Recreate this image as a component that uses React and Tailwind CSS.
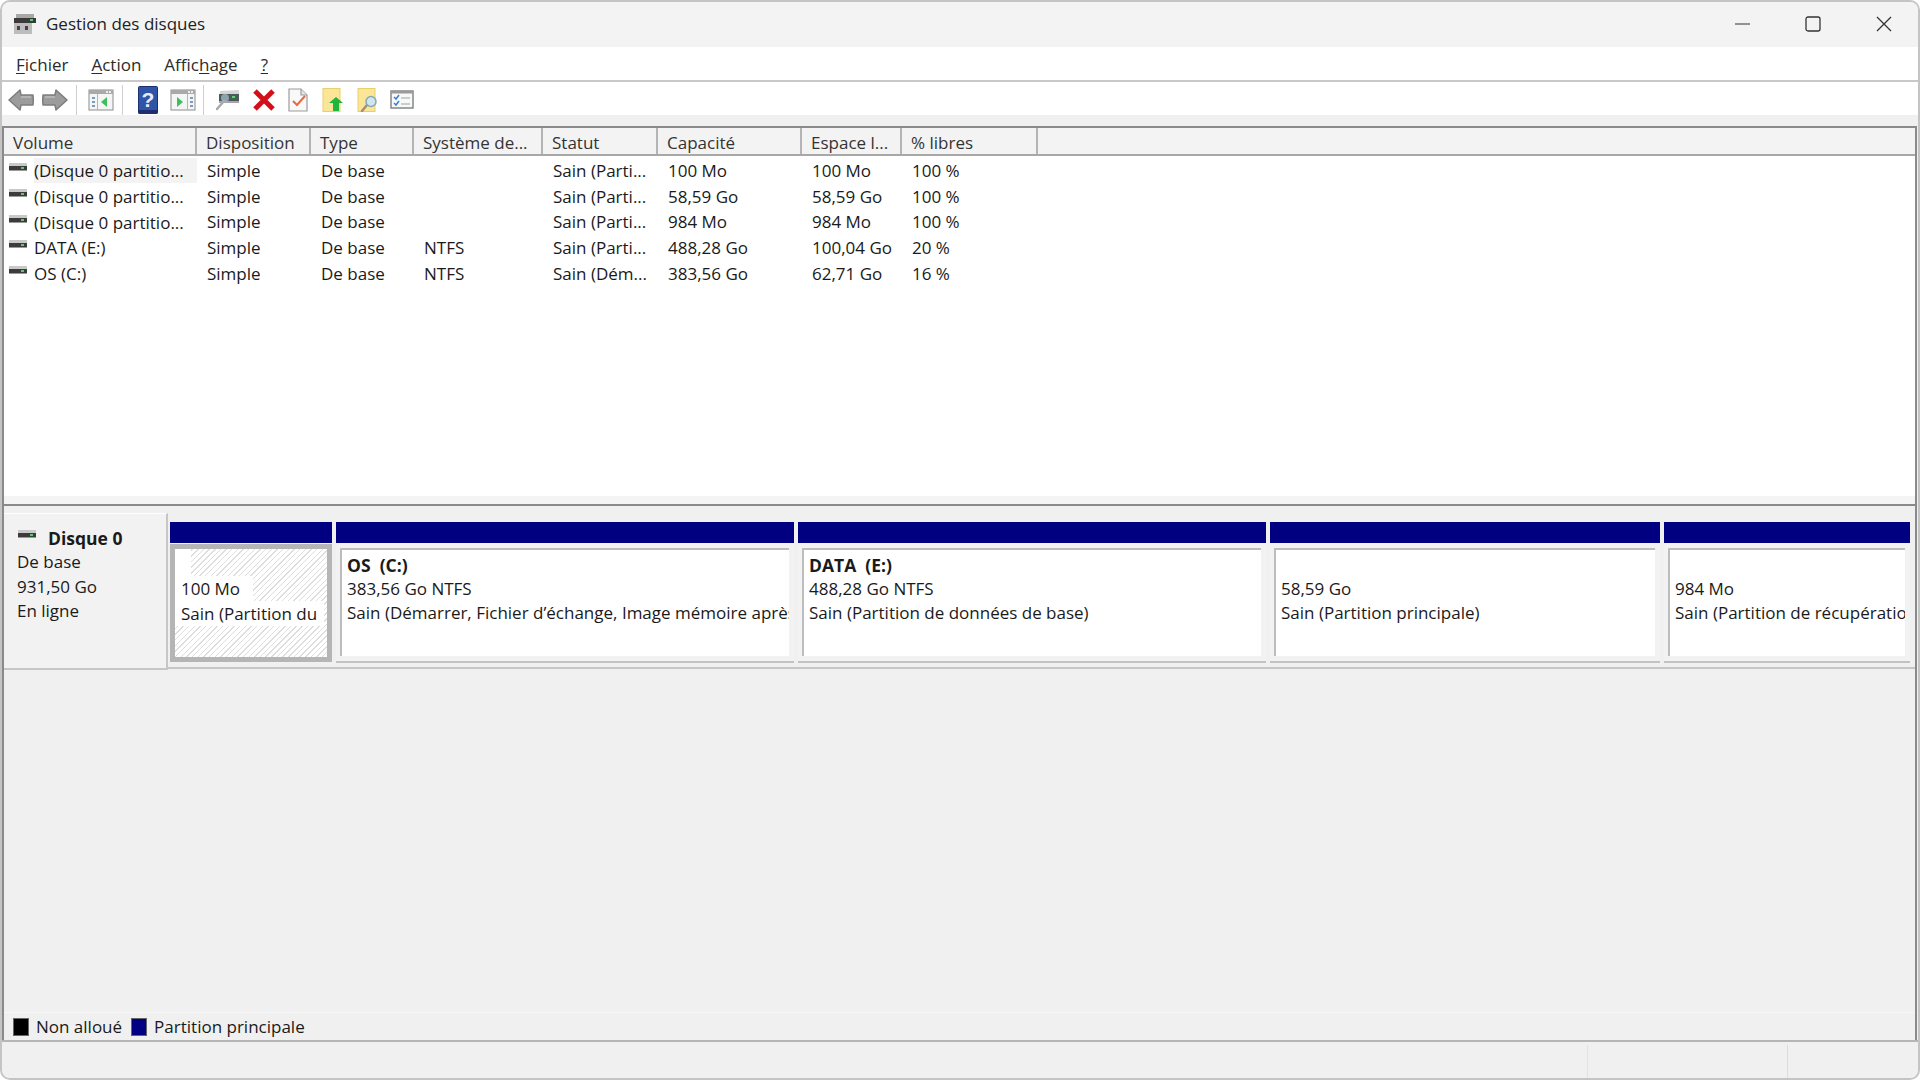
import React from 'react'

const font = { fontFamily: '"Open Sans", "Noto Sans", sans-serif' }

const columns = [
  { label: 'Volume', w: 'w-[193px]' },
  { label: 'Disposition', w: 'w-[114px]' },
  { label: 'Type', w: 'w-[103px]' },
  { label: 'Système de...', w: 'w-[129px]' },
  { label: 'Statut', w: 'w-[115px]' },
  { label: 'Capacité', w: 'w-[144px]' },
  { label: 'Espace l...', w: 'w-[100px]' },
  { label: '% libres', w: 'w-[136px]' },
]

const rows = [
  ['(Disque 0 partitio...', 'Simple', 'De base', '', 'Sain (Parti...', '100 Mo', '100 Mo', '100 %'],
  ['(Disque 0 partitio...', 'Simple', 'De base', '', 'Sain (Parti...', '58,59 Go', '58,59 Go', '100 %'],
  ['(Disque 0 partitio...', 'Simple', 'De base', '', 'Sain (Parti...', '984 Mo', '984 Mo', '100 %'],
  ['DATA (E:)', 'Simple', 'De base', 'NTFS', 'Sain (Parti...', '488,28 Go', '100,04 Go', '20 %'],
  ['OS (C:)', 'Simple', 'De base', 'NTFS', 'Sain (Dém...', '383,56 Go', '62,71 Go', '16 %'],
]

function DiskIcon() {
  return (
    <svg width="20" height="10" viewBox="0 0 20 10" className="shrink-0">
      <rect x="1" y="0" width="18" height="3" fill="#c9c9c9" />
      <rect x="1" y="3" width="18" height="4" fill="#3c3c3c" />
      <rect x="13" y="4" width="3" height="2" fill="#4fd16a" />
      <rect x="1" y="7" width="18" height="1" fill="#9a9a9a" />
    </svg>
  )
}

function ArrowIcon({ flip }) {
  return (
    <svg width="26" height="24" viewBox="0 0 26 24" className={flip ? '-scale-x-100' : ''}>
      <path d="M1 12 L12 2 L13 7 L25 7 Q25.500 12 25 17 L13 17 L12 22 Z" fill="#9c9c9c" stroke="#7d7d7d" strokeWidth="1.500" strokeLinejoin="round" />
      <path d="M13 9 L23 9" stroke="#bdbdbd" strokeWidth="1.500" />
    </svg>
  )
}

function PaneIcon({ right }) {
  return (
    <svg width="26" height="22" viewBox="0 0 26 22">
      <rect x="1" y="1" width="24" height="20" fill="#f4f6f6" stroke="#8c8c8c" />
      <rect x="1" y="1" width="24" height="4" fill="#a9a9a9" />
      <rect x="18" y="2" width="2" height="2" fill="#eee" />
      <rect x="21" y="2" width="2" height="2" fill="#eee" />
      {right ? (
        <>
          <rect x="17" y="5" width="1" height="16" fill="#b5b5b5" />
          <rect x="20" y="8" width="3" height="2" fill="#7f9bb5" />
          <rect x="20" y="12" width="3" height="2" fill="#7f9bb5" />
          <rect x="20" y="16" width="3" height="2" fill="#7f9bb5" />
          <path d="M7 8 L13 13 L7 18 Z" fill="#3fbf5a" />
        </>
      ) : (
        <>
          <rect x="9" y="5" width="1" height="16" fill="#b5b5b5" />
          <rect x="4" y="8" width="3" height="2" fill="#7f9bb5" />
          <rect x="4" y="12" width="3" height="2" fill="#7f9bb5" />
          <rect x="4" y="16" width="3" height="2" fill="#7f9bb5" />
          <path d="M19 8 L13 13 L19 18 Z" fill="#3fbf5a" />
        </>
      )}
    </svg>
  )
}

function HelpIcon() {
  return (
    <svg width="20" height="28" viewBox="0 0 20 28">
      <rect x="0.500" y="0.500" width="19" height="27" rx="1" fill="#2f55a8" stroke="#1d2f6e" />
      <rect x="0.500" y="24" width="19" height="3.500" fill="#1d2f6e" />
      <text x="10" y="21" textAnchor="middle" fontSize="21" fontWeight="700" fill="#e8ecff" fontFamily="Liberation Sans, sans-serif">?</text>
    </svg>
  )
}

function LensIcon({ x, y }) {
  return (
    <g transform={`translate(${x} ${y})`}>
      <path d="M5 9 L0 15" stroke="#a08f7a" strokeWidth="2.500" strokeLinecap="round" />
      <circle cx="9" cy="5.500" r="5" fill="#cfe6ee" stroke="#8aa7b5" strokeWidth="1.500" />
    </g>
  )
}

function DriveLensIcon() {
  return (
    <svg width="24" height="22" viewBox="0 0 24 22">
      <path d="M4 2 L23 1 L23 5 L4 5 Z" fill="#d5d5d5" />
      <rect x="3" y="5" width="20" height="7" fill="#4b5a5a" />
      <rect x="16" y="7" width="3" height="2" fill="#55d66f" />
      <rect x="3" y="12" width="20" height="2" fill="#a6a6a6" />
      <path d="M8 12 L1 20" stroke="#a9a9a9" strokeWidth="2.500" strokeLinecap="round" />
      <circle cx="9" cy="9" r="4" fill="#9db7c2" opacity="0.8" />
    </svg>
  )
}

function CrossIcon() {
  return (
    <svg width="24" height="22" viewBox="0 0 24 22">
      <path d="M3 2 L21 20 M21 2 L3 20" stroke="#d3101a" strokeWidth="5" />
    </svg>
  )
}

function TaskIcon() {
  return (
    <svg width="20" height="24" viewBox="0 0 20 24">
      <path d="M1 1 L13 1 L19 7 L19 23 L1 23 Z" fill="#f9f9f9" stroke="#9b9b9b" strokeWidth="1.200" />
      <path d="M13 1 L13 7 L19 7" fill="#e5e5e5" stroke="#9b9b9b" strokeWidth="1.200" />
      <path d="M5 13 L9 17 L17 8" fill="none" stroke="#e8693f" strokeWidth="2" />
    </svg>
  )
}

function FolderUpIcon() {
  return (
    <svg width="22" height="24" viewBox="0 0 22 24">
      <rect x="1" y="0.500" width="17" height="23" fill="#fbe697" stroke="#e9cf6c" />
      <path d="M14 9 L21 15 L17 15 L17 23 L11 23 L11 15 L7 15 Z" fill="#22b53c" />
    </svg>
  )
}

function FolderFindIcon() {
  return (
    <svg width="22" height="24" viewBox="0 0 22 24">
      <rect x="1" y="0.500" width="17" height="23" fill="#fbe697" stroke="#e9cf6c" />
      <LensIcon x={5} y={8} />
    </svg>
  )
}

function ListIcon() {
  return (
    <svg width="24" height="19" viewBox="0 0 24 19">
      <rect x="1" y="1" width="22" height="17" fill="#f7f8f8" stroke="#878787" strokeWidth="1.500" />
      <rect x="1" y="1" width="22" height="2.500" fill="#9a9a9a" />
      <path d="M4 7 L6 9 L9 5 M4 13 L6 15 L9 11" fill="none" stroke="#3d7fd6" strokeWidth="1.500" />
      <path d="M11 8 L20 8 M11 14 L20 14" stroke="#bdbdbd" strokeWidth="1.500" />
    </svg>
  )
}

function Separator() {
  return <div className="w-[1px] h-[30px] bg-[#cfcfcf]" />
}

function Partition({ w, title, size, status }) {
  return (
    <div className={`${w} shrink-0 h-full flex flex-col`}>
      <div className="h-[21px] bg-[#000080] shrink-0" />
      <div className="flex-1 min-h-0 pt-[5px] pl-[4px] pr-[5px] pb-[5px] bg-[#f2f2f2] border-b-2 border-[#c2c2c2]">
        <div className="h-full bg-white border-t-2 border-l-2 border-[#bdbdbd] pl-[5px] pt-[2px] overflow-hidden whitespace-pre text-[17px] leading-[24.500px]">
          <div className="h-[24.500px] font-bold text-[17.500px] pt-[1px]">{title}</div>
          <div>{size}</div>
          <div>{status}</div>
        </div>
      </div>
    </div>
  )
}

export default function App() {
  return (
    <div className="w-[1920px] h-[1080px] bg-white text-[#1a1a1a] overflow-hidden" style={font}>
      <div className="h-full flex flex-col bg-[#f0f0f0] border-2 border-[#c4c4c4] rounded-[10px] overflow-hidden">
        {/* Title bar */}
        <div className="h-[45px] shrink-0 flex items-center bg-[#f3f3f3] pl-[11px] pb-[2px]">
          <svg width="24" height="22" viewBox="0 0 24 22">
            <rect x="3" y="1" width="18" height="4" fill="#a8a8a8" />
            <rect x="1" y="5" width="22" height="5" fill="#3a3a3a" />
            <rect x="17" y="6" width="3" height="2" fill="#4fd16a" />
            <rect x="1" y="10" width="18" height="11" fill="#bcbcbc" />
            <rect x="4" y="13" width="3" height="4" fill="#444" />
            <rect x="12" y="13" width="3" height="4" fill="#444" />
          </svg>
          <span className="ml-[9px] text-[17px] text-[#222]">Gestion des disques</span>
          <div className="ml-auto flex items-center h-full">
            <svg width="16" height="16" viewBox="0 0 16 16" className="mr-[54px]">
              <path d="M0 8 H15" stroke="#333" strokeWidth="1.200" />
            </svg>
            <svg width="16" height="16" viewBox="0 0 16 16" className="mr-[55px]">
              <rect x="1" y="1" width="14" height="14" rx="2" fill="none" stroke="#333" strokeWidth="1.300" />
            </svg>
            <svg width="16" height="16" viewBox="0 0 16 16" className="mr-[26px]">
              <path d="M1 1 L15 15 M15 1 L1 15" stroke="#333" strokeWidth="1.300" />
            </svg>
          </div>
        </div>

        {/* Menu */}
        <div className="h-[35px] shrink-0 bg-white border-b-2 border-[#c8c8c8] flex items-center pl-[14px] pt-[3px] gap-[23px] text-[17px] text-[#2b2b2b]">
          <span><u className="underline-offset-2">F</u>ichier</span>
          <span><u className="underline-offset-2">A</u>ction</span>
          <span>Affic<u className="underline-offset-2">h</u>age</span>
          <span><u className="underline-offset-2">?</u></span>
        </div>

        {/* Toolbar */}
        <div className="h-[33px] shrink-0 bg-white flex items-center pl-[6px] pt-[2px]">
          <ArrowIcon />
          <div className="w-[8px]" />
          <ArrowIcon flip />
          <div className="w-[8px]" />
          <Separator />
          <div className="w-[11px]" />
          <PaneIcon />
          <div className="w-[8px]" />
          <Separator />
          <div className="w-[15px]" />
          <HelpIcon />
          <div className="w-[12px]" />
          <PaneIcon right />
          <div className="w-[7px]" />
          <Separator />
          <div className="w-[12px]" />
          <DriveLensIcon />
          <div className="w-[12px]" />
          <CrossIcon />
          <div className="w-[12px]" />
          <TaskIcon />
          <div className="w-[14px]" />
          <FolderUpIcon />
          <div className="w-[13px]" />
          <FolderFindIcon />
          <div className="w-[11px]" />
          <ListIcon />
        </div>

        <div className="h-[11px] shrink-0" />

        {/* Main area */}
        <div className="flex-1 flex flex-col border-l-2 border-r-2 border-[#8a8a8a] min-h-0 mr-[1px]">
          {/* Volume list */}
          <div className="h-[378px] shrink-0 flex flex-col bg-white border-t-2 border-[#8a8a8a]">
            <div className="h-[28px] shrink-0 flex bg-[#f3f3f3] border-b-2 border-[#a8a8a8] text-[17px] text-[#333]">
              {columns.map((c) => (
                <div key={c.label} className={`${c.w} shrink-0 pl-[9px] pt-[2px] border-r-2 border-[#b4b4b4] leading-[26px] whitespace-nowrap`}>
                  {c.label}
                </div>
              ))}
            </div>
            <div className="flex-1 pt-[2px] text-[17px]">
              {rows.map((r, i) => (
                <div key={i} className="flex h-[25.700px] items-center">
                  {r.map((cell, j) => (
                    <div
                      key={j}
                      className={`${columns[j].w} shrink-0 whitespace-nowrap ${j === 0 ? 'flex items-center' : 'pl-[10px]'}`}
                    >
                      {j === 0 ? (
                        <>
                          <div className="pl-[4px] pr-[6px] -mt-[5px]"><DiskIcon /></div>
                          <span className={`flex-1 leading-[25px] ${i === 0 ? 'bg-[#f3f3f3]' : ''}`}>{cell}</span>
                        </>
                      ) : cell}
                    </div>
                  ))}
                </div>
              ))}
            </div>
          </div>
          <div className="h-[8px] shrink-0 -mt-[8px] bg-[#f4f4f4]" />
          <div className="h-[2px] shrink-0 bg-[#8a8a8a]" />

          {/* Disk map */}
          <div className="flex-1 flex flex-col min-h-0">
            <div className="h-[157px] mt-[7px] shrink-0 flex">
              <div className="w-[164px] shrink-0 bg-[#f2f2f2] border-t border-white border-r-2 border-b-2 border-r-[#c6c6c6] border-b-[#c6c6c6] pl-[13px] pt-[12px] text-[17px] leading-[24.300px]">
                <div className="flex items-center gap-[11px] font-bold text-[17.500px]">
                  <div className="-mt-[6px]"><DiskIcon /></div>
                  Disque 0
                </div>
                <div>De base</div>
                <div>931,50 Go</div>
                <div>En ligne</div>
              </div>

              <div className="flex-1 flex flex-col min-w-0">
                <div className="h-[141px] mt-[9px] shrink-0 flex items-stretch gap-[4px] pl-[2px] overflow-hidden">
                  {/* Selected partition */}
                  <div className="w-[162px] shrink-0 flex flex-col">
                    <div className="h-[21px] bg-[#000080] shrink-0" />
                    <div className="h-[118px] mt-[1px] border-[5px] border-[#b5b5b5]">
                      <div className="h-full bg-[repeating-linear-gradient(135deg,#dedede_0,#dedede_1px,#ffffff_1px,#ffffff_4px)] text-[17px] leading-[25px] whitespace-nowrap overflow-hidden">
                        <div className="w-[16px] h-[27px] bg-white" />
                        <div className="w-[78px] pl-[6px] bg-white">100 Mo</div>
                        <div className="w-[149px] pl-[6px] bg-white">Sain (Partition du</div>
                      </div>
                    </div>
                  </div>
                  <Partition w="w-[458px]" title="OS  (C:)" size="383,56 Go NTFS" status="Sain (Démarrer, Fichier d’échange, Image mémoire après" />
                  <Partition w="w-[468px]" title="DATA  (E:)" size="488,28 Go NTFS" status="Sain (Partition de données de base)" />
                  <Partition w="w-[390px]" title="" size="58,59 Go" status="Sain (Partition principale)" />
                  <Partition w="w-[246px]" title="" size="984 Mo" status="Sain (Partition de récupération)" />
                </div>
                <div className="h-[2px] mt-[4px] shrink-0 bg-[#c6c6c6]" />
              </div>
            </div>

            {/* Legend */}
            <div className="mt-auto h-[28px] shrink-0 flex items-center pl-[9px] border-t border-[#f7f7f7] text-[17px]">
              <div className="w-[16px] h-[18px] bg-black border border-[#666]" />
              <span className="ml-[7px]">Non alloué</span>
              <div className="ml-[9px] w-[16px] h-[18px] bg-[#000080] border border-[#666]" />
              <span className="ml-[7px]">Partition principale</span>
            </div>
          </div>
        </div>

        {/* Status bar */}
        <div className="h-[38px] shrink-0 bg-[#f0f0f0] border-t-2 border-[#b5b5b5] flex justify-end">
          <div className="w-[200px] mt-[3px] border-l border-[#e2e2e2]" />
          <div className="w-[131px] mt-[3px] border-l border-[#dcdcdc]" />
        </div>
      </div>
    </div>
  )
}
